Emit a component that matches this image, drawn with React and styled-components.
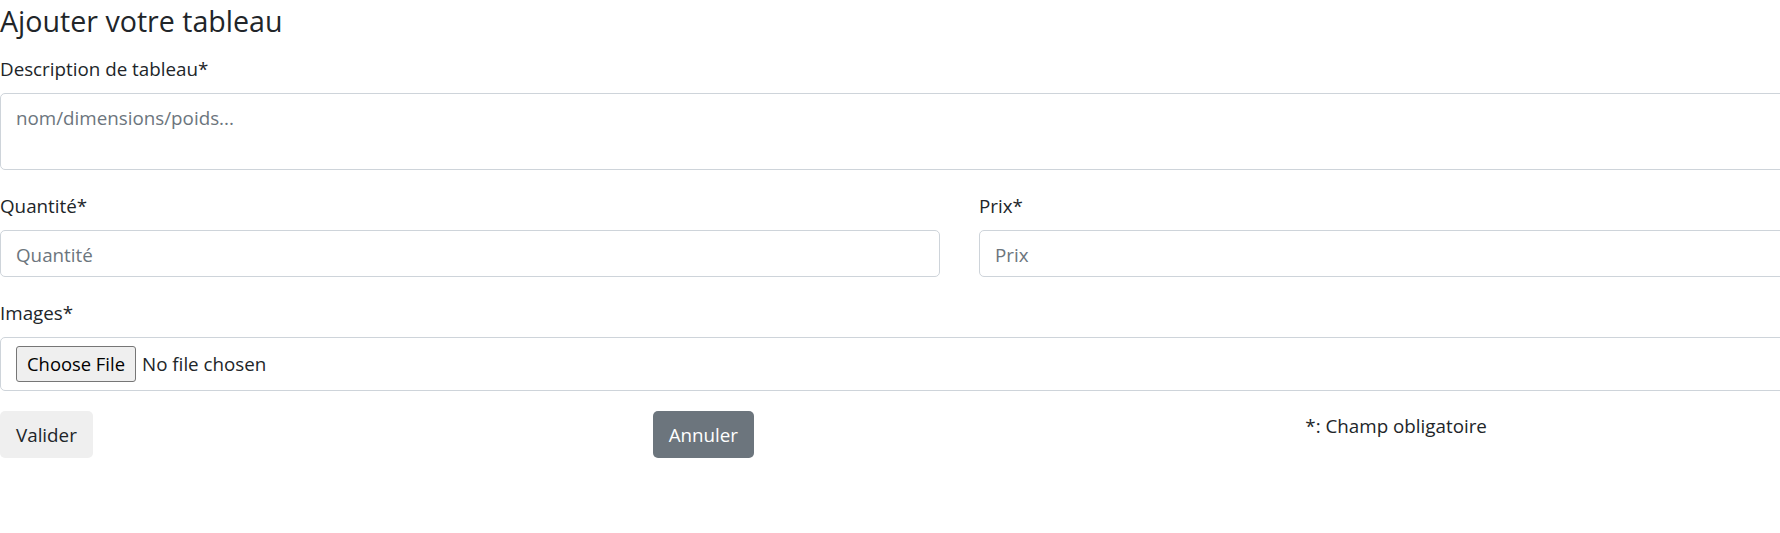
import React from "react";
import styled, { createGlobalStyle } from "styled-components";

const GlobalStyle = createGlobalStyle`
  html, body {
    margin: 0;
    padding: 0;
    background: #ffffff;
    overflow: hidden;
  }
  body {
    font-family: "Open Sans", "Noto Sans", sans-serif;
    color: #212529;
  }
  *, *::before, *::after { box-sizing: border-box; }
`;

const Viewport = styled.div`
  width: 100%;
  overflow: hidden;
`;

const Form = styled.form`
  width: 1919px;
  display: flex;
  flex-direction: column;
`;

const Title = styled.h4`
  margin: 3px 0 15px;
  font-size: 28.6px;
  line-height: 36px;
  font-weight: 400;
  color: #212529;
`;

const Group = styled.div`
  display: flex;
  flex-direction: column;
  margin-bottom: ${(p) => p.$mb}px;
`;

const Label = styled.label`
  font-size: 18.8px;
  line-height: 30px;
  margin-bottom: 9px;
  color: #212529;
`;

const fieldBase = `
  width: 100%;
  border: 1px solid #ced4da;
  border-radius: 5px;
  background: #ffffff;
  color: #495057;
  font-family: "Open Sans", "Noto Sans", sans-serif;
  font-size: 18.8px;
  line-height: 30px;
  outline: none;
  &::placeholder { color: #6c757d; opacity: 1; }
`;

const TextArea = styled.textarea`
  ${fieldBase}
  height: 77px;
  padding: 8.5px 15px 6.5px;
  resize: none;
  display: block;
`;

const Input = styled.input`
  ${fieldBase}
  height: 47px;
  padding: 8.5px 15px 6.5px;
  display: block;
`;

const Row = styled.div`
  display: grid;
  grid-template-columns: repeat(${(p) => p.$cols}, minmax(0, 1fr));
  column-gap: 39px;
  align-items: start;
  margin-bottom: ${(p) => p.$mb || 0}px;
`;

const Column = styled.div`
  display: flex;
  flex-direction: column;
`;

const FileBox = styled.div`
  height: 54px;
  border: 1px solid #ced4da;
  border-radius: 5px;
  padding: 8px 15px;
  display: flex;
  align-items: center;
  gap: 6px;
  font-size: 18.8px;
  color: #212529;
`;

const ChooseButton = styled.button`
  height: 36px;
  width: 120px;
  padding: 0 8px;
  background: #efefef;
  border: 1px solid #767676;
  border-radius: 3px;
  font-family: "Open Sans", "Noto Sans", sans-serif;
  font-size: 18.4px;
  line-height: 34px;
  color: #000000;
  white-space: nowrap;
`;

const FileText = styled.span`
  font-size: 18.8px;
  line-height: 30px;
  color: #212529;
`;

const Button = styled.button`
  justify-self: start;
  height: 47px;
  padding: 8px 15px 7px;
  border: 1px solid transparent;
  border-radius: 5px;
  font-family: "Open Sans", "Noto Sans", sans-serif;
  font-size: 18.8px;
  line-height: 30px;
  background: ${(p) => (p.$variant === "secondary" ? "#6c757d" : "#efefef")};
  color: ${(p) => (p.$variant === "secondary" ? "#ffffff" : "#212529")};
  white-space: nowrap;
`;

const Note = styled.span`
  font-size: 18.8px;
  line-height: 30px;
  color: #212529;
`;

export default function App() {
  return (
    <Viewport>
      <GlobalStyle />
      <Form onSubmit={(e) => e.preventDefault()}>
        <Title>Ajouter votre tableau</Title>

        <Group $mb={21}>
          <Label htmlFor="desc">Description de tableau*</Label>
          <TextArea id="desc" rows={2} placeholder="nom/dimensions/poids..." />
        </Group>

        <Row $cols={2} $mb={21}>
          <Column>
            <Label htmlFor="qte">Quantité*</Label>
            <Input id="qte" type="text" placeholder="Quantité" />
          </Column>
          <Column>
            <Label htmlFor="prix">Prix*</Label>
            <Input id="prix" type="text" placeholder="Prix" />
          </Column>
        </Row>

        <Group $mb={20}>
          <Label>Images*</Label>
          <FileBox>
            <ChooseButton type="button">Choose File</ChooseButton>
            <FileText>No file chosen</FileText>
          </FileBox>
        </Group>

        <Row $cols={3}>
          <Button type="submit">Valider</Button>
          <Button type="button" $variant="secondary">
            Annuler
          </Button>
          <Note>*: Champ obligatoire</Note>
        </Row>
      </Form>
    </Viewport>
  );
}
